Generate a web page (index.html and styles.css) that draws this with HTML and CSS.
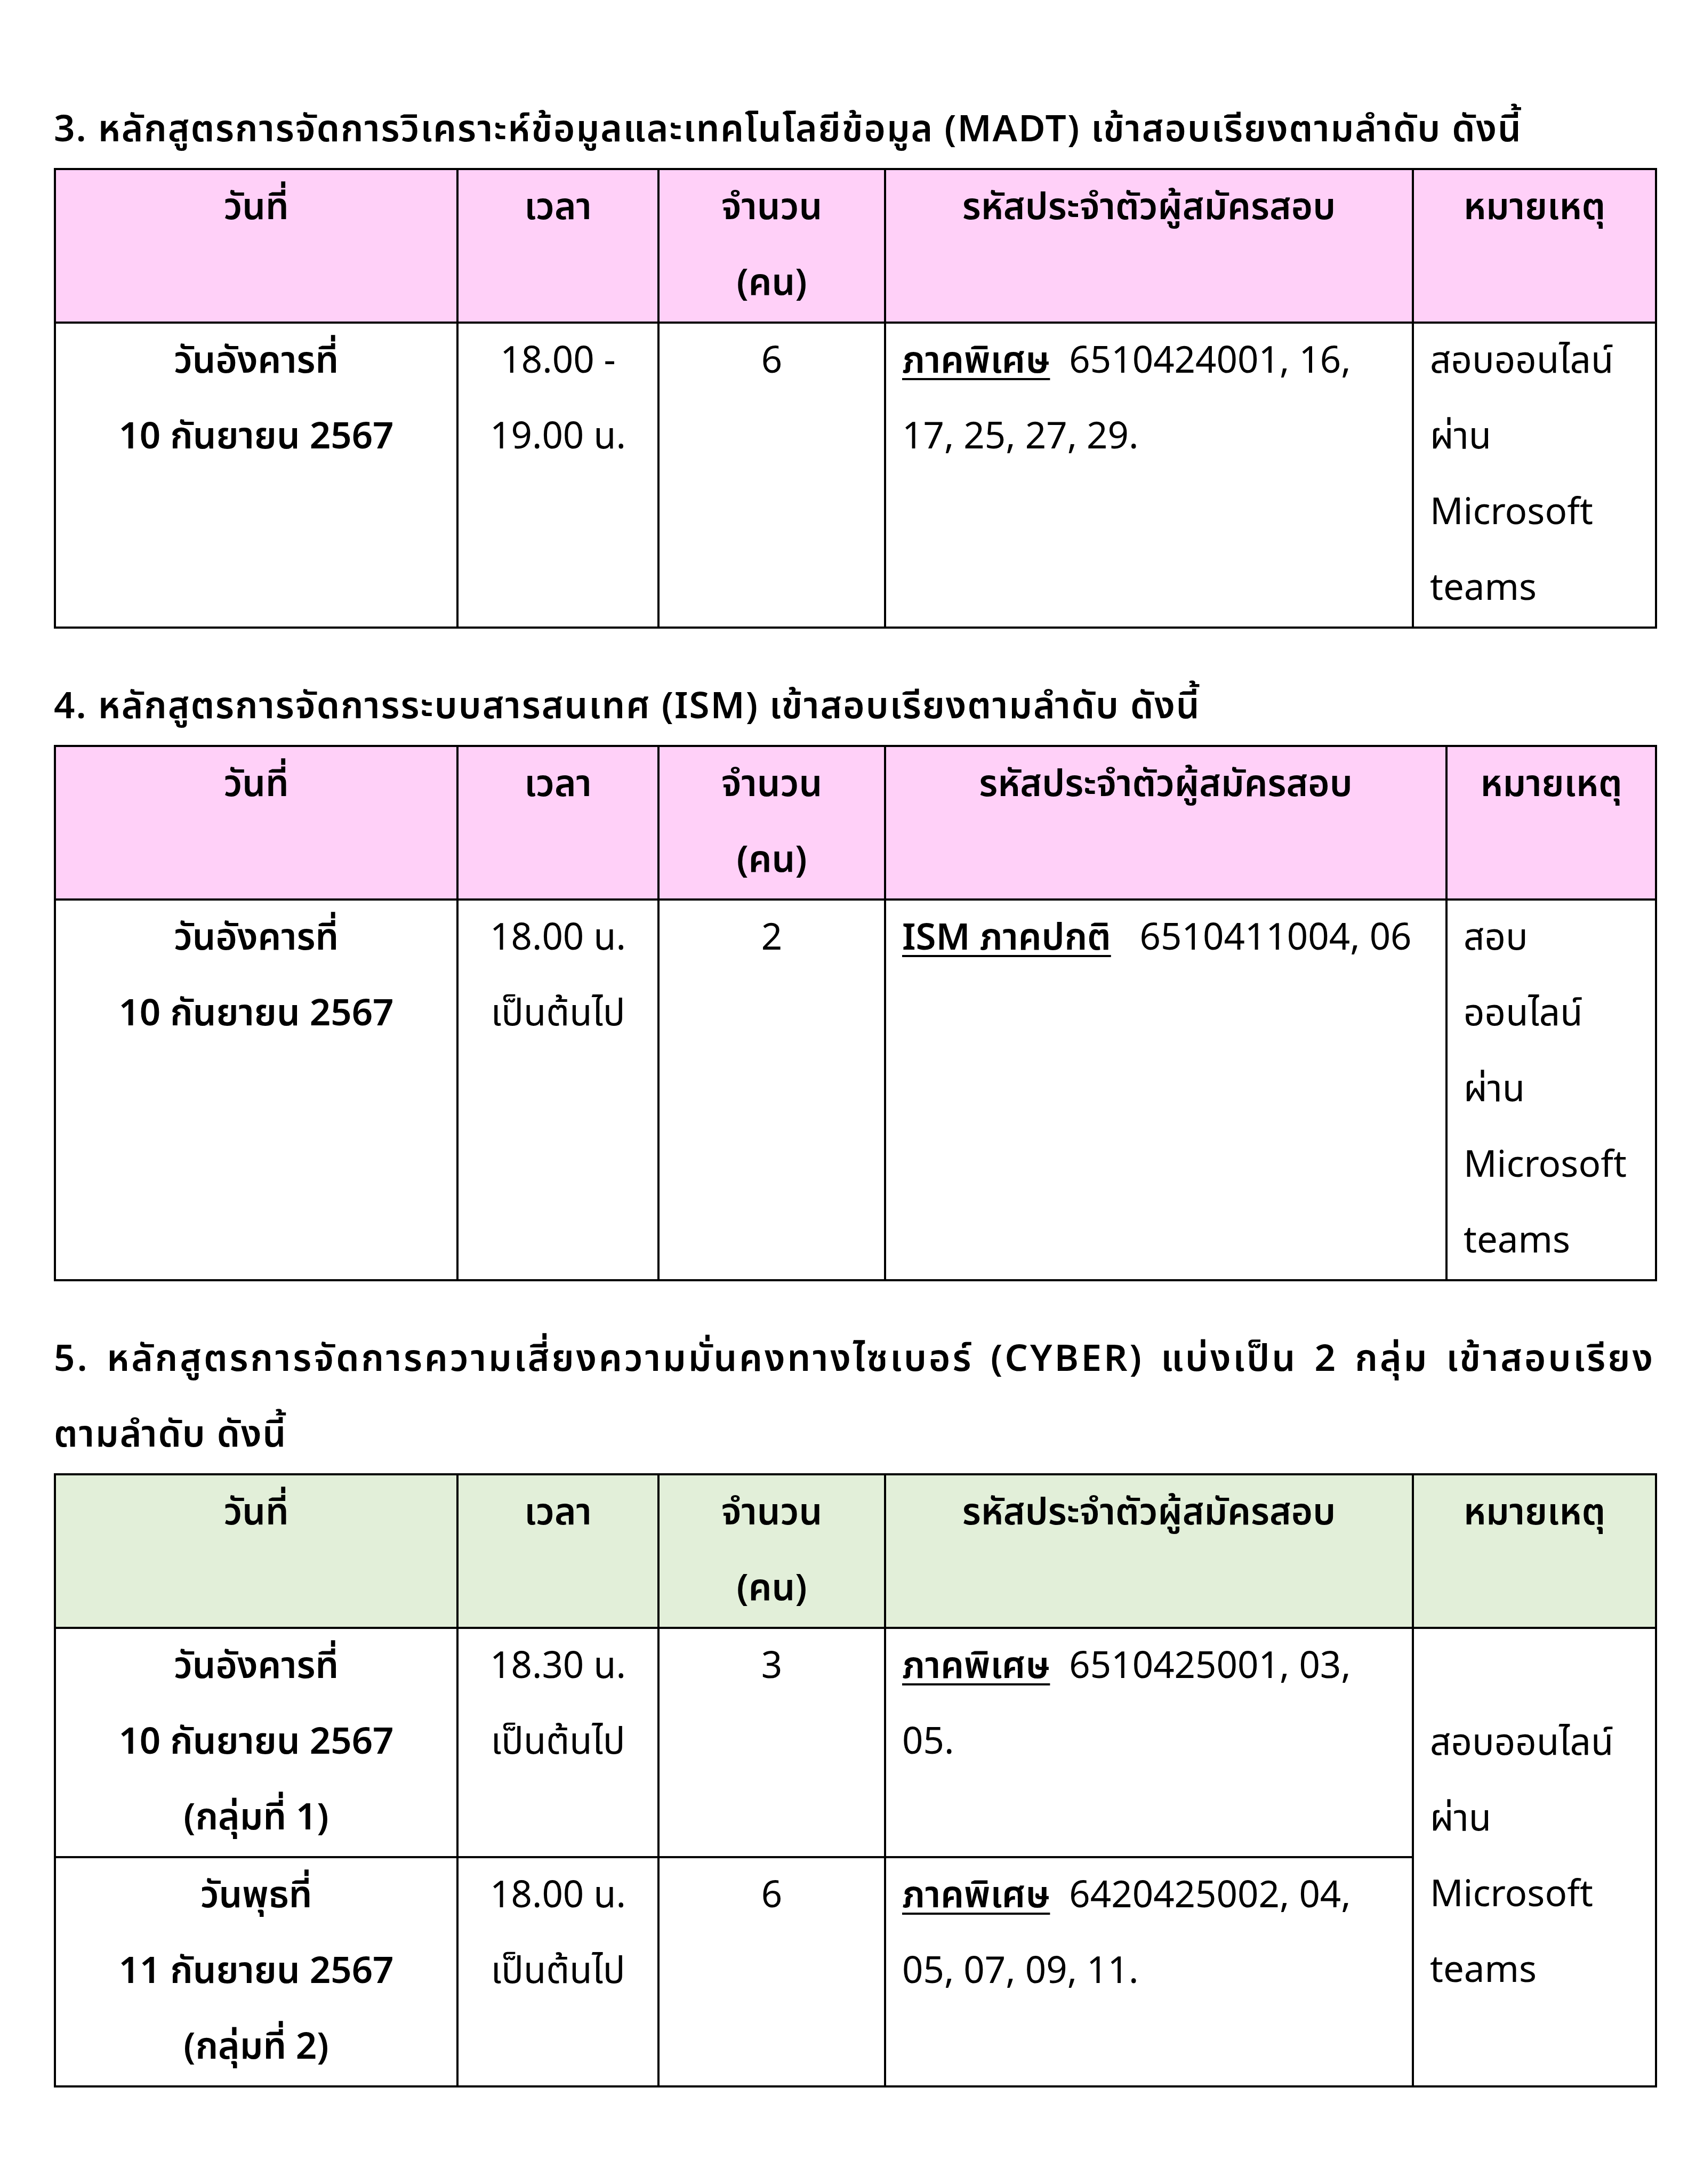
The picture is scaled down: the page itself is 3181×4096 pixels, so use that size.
FILE: index.html
```html
<!DOCTYPE html>
<html lang="th">
<head>
<meta charset="utf-8">
<title>ตารางสอบ</title>
<link rel="stylesheet" href="styles.css">
</head>
<body>
<main class="page">
  <p class="heading">3. หลักสูตรการจัดการวิเคราะห์ข้อมูลและเทคโนโลยีข้อมูล (MADT) เข้าสอบเรียงตามลำดับ ดังนี้</p>
  <table class="sched pink">
    <colgroup><col class="c-date"><col class="c-time"><col class="c-num"><col class="c-id"><col class="c-note"></colgroup>
    <thead>
      <tr><th>วันที่</th><th>เวลา</th><th>จำนวน<br>(คน)</th><th>รหัสประจำตัวผู้สมัครสอบ</th><th>หมายเหตุ</th></tr>
    </thead>
    <tbody>
      <tr>
        <td class="date">วันอังคารที่<br>10 กันยายน 2567</td>
        <td class="ctr">18.00 -<br>19.00 น.</td>
        <td class="ctr">6</td>
        <td class="ids"><b class="tag">ภาคพิเศษ</b>&nbsp; 6510424001, 16,<br>17, 25, 27, 29.</td>
        <td class="note">สอบออนไลน์<br>ผ่าน<br>Microsoft<br>teams</td>
      </tr>
    </tbody>
  </table>

  <p class="heading">4. หลักสูตรการจัดการระบบสารสนเทศ (ISM) เข้าสอบเรียงตามลำดับ ดังนี้</p>
  <table class="sched pink ism">
    <colgroup><col class="c-date"><col class="c-time"><col class="c-num"><col class="c-id"><col class="c-note"></colgroup>
    <thead>
      <tr><th>วันที่</th><th>เวลา</th><th>จำนวน<br>(คน)</th><th>รหัสประจำตัวผู้สมัครสอบ</th><th>หมายเหตุ</th></tr>
    </thead>
    <tbody>
      <tr>
        <td class="date">วันอังคารที่<br>10 กันยายน 2567</td>
        <td class="ctr">18.00 น.<br>เป็นต้นไป</td>
        <td class="ctr">2</td>
        <td class="ids"><b class="tag">ISM ภาคปกติ</b>&nbsp;&nbsp; 6510411004, 06</td>
        <td class="note">สอบ<br>ออนไลน์<br>ผ่าน<br>Microsoft<br>teams</td>
      </tr>
    </tbody>
  </table>

  <p class="heading heading-just"><span class="just-line">5. หลักสูตรการจัดการความเสี่ยงความมั่นคงทางไซเบอร์ (CYBER) แบ่งเป็น 2 กลุ่ม เข้าสอบเรียง</span><span class="last-line">ตามลำดับ ดังนี้</span></p>
  <table class="sched green">
    <colgroup><col class="c-date"><col class="c-time"><col class="c-num"><col class="c-id"><col class="c-note"></colgroup>
    <thead>
      <tr><th>วันที่</th><th>เวลา</th><th>จำนวน<br>(คน)</th><th>รหัสประจำตัวผู้สมัครสอบ</th><th>หมายเหตุ</th></tr>
    </thead>
    <tbody>
      <tr>
        <td class="date">วันอังคารที่<br>10 กันยายน 2567<br>(กลุ่มที่ 1)</td>
        <td class="ctr">18.30 น.<br>เป็นต้นไป</td>
        <td class="ctr">3</td>
        <td class="ids"><b class="tag">ภาคพิเศษ</b>&nbsp; 6510425001, 03,<br>05.</td>
        <td class="note mid" rowspan="2">สอบออนไลน์<br>ผ่าน<br>Microsoft<br>teams</td>
      </tr>
      <tr>
        <td class="date">วันพุธที่<br>11 กันยายน 2567<br>(กลุ่มที่ 2)</td>
        <td class="ctr">18.00 น.<br>เป็นต้นไป</td>
        <td class="ctr">6</td>
        <td class="ids"><b class="tag">ภาคพิเศษ</b>&nbsp; 6420425002, 04,<br>05, 07, 09, 11.</td>
      </tr>
    </tbody>
  </table>
</main>
</body>
</html>
```

FILE: styles.css
```css
html, body {
  margin: 0;
  padding: 0;
  background: #ffffff;
}

body {
  font-family: "Noto Sans Thai", "Noto Sans", "DejaVu Sans", sans-serif;
  font-size: 69px;
  line-height: 142px;
  color: #000000;
}

.page {
  width: 3181px;
  box-sizing: border-box;
  padding: 173px 0 0 101px;
}

.heading {
  margin: 0;
  width: 3003px;
  font-weight: 600;
  letter-spacing: 2px;
  white-space: nowrap;
}

.heading-just .just-line {
  display: block;
  letter-spacing: 4px;
  text-align: justify;
  text-align-last: justify;
}

.heading-just .last-line {
  display: block;
}

.sched {
  width: 3003px;
  border-collapse: collapse;
  table-layout: fixed;
  margin: 0 0 76px 0;
}

.sched th,
.sched td {
  border: 4px solid #000000;
  padding: 0 30px;
  vertical-align: top;
  white-space: nowrap;
}

.sched th {
  font-weight: 600;
  text-align: center;
}

.pink thead th {
  background: #ffd0f8;
}

.green thead th {
  background: #e2efd9;
}

.c-date { width: 755px; }
.c-time { width: 377px; }
.c-num { width: 425px; }
.c-id { width: 990px; }
.c-note { width: 456px; }

.ism .c-id { width: 1053px; }
.ism .c-note { width: 393px; }

.date {
  font-weight: 600;
  text-align: center;
}

.ctr {
  text-align: center;
}

.ids,
.note {
  text-align: left;
}

.note.mid {
  vertical-align: middle;
}

.tag {
  font-weight: 600;
  text-decoration: underline;
  text-decoration-thickness: 4px;
  text-underline-offset: 10px;
}
```
